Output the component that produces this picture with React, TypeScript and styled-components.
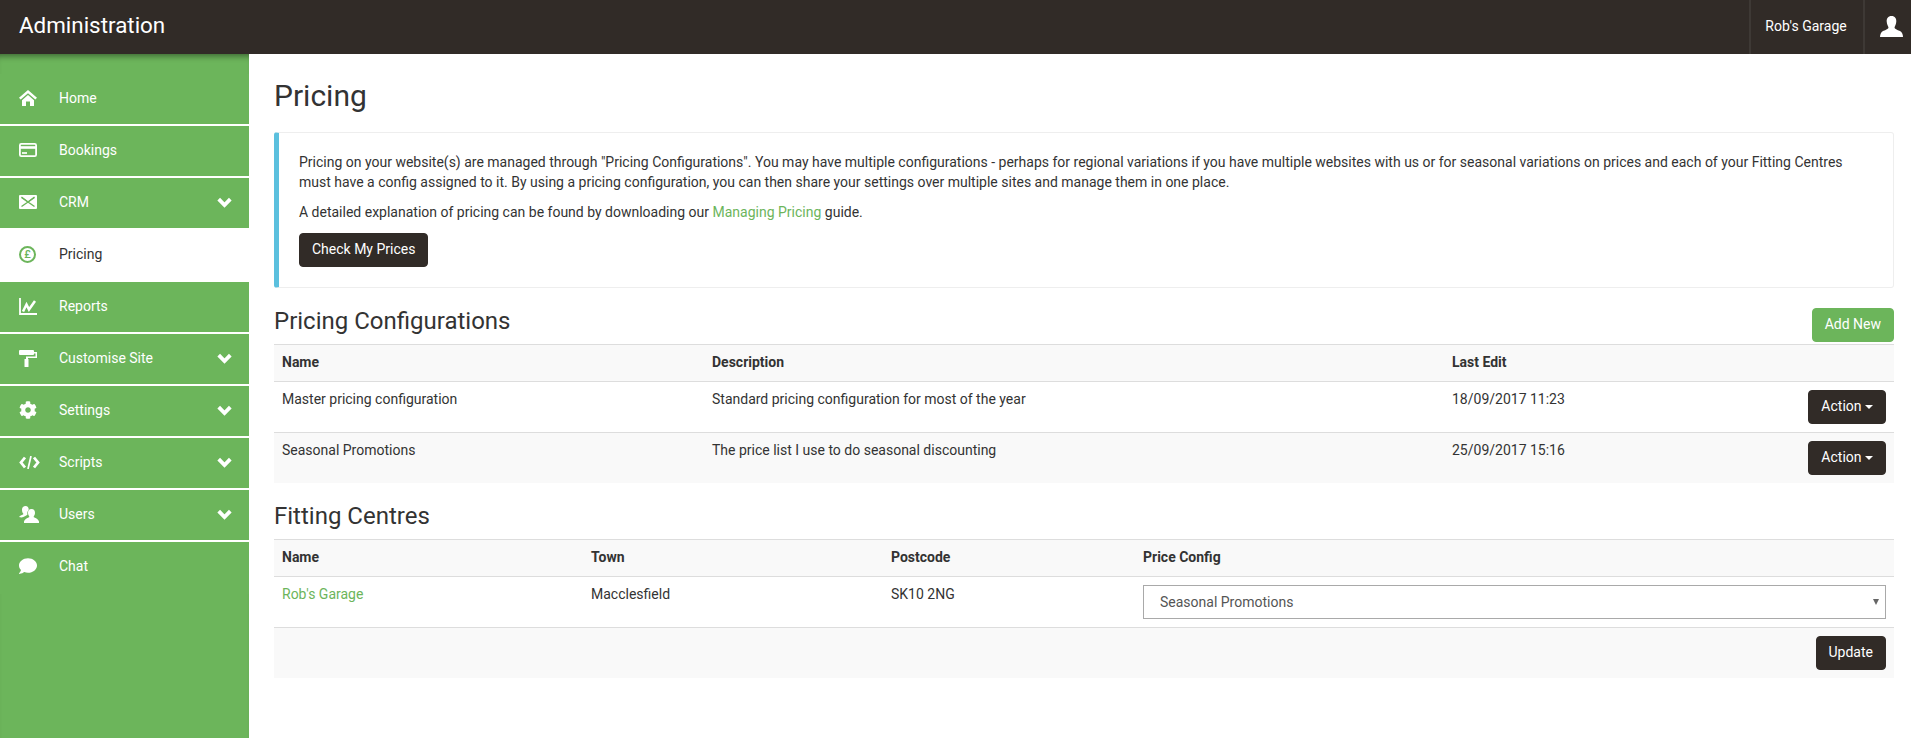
import React from "react";
import styled, { createGlobalStyle } from "styled-components";
import { FaCog, FaComment } from "react-icons/fa";

const GREEN = "#6cb55b";
const DARK = "#312b27";

const Global = createGlobalStyle`
  html, body { margin: 0; padding: 0; background: #fff; }
  body { font-family: Roboto, "Liberation Sans", sans-serif; font-size: 14px; line-height: 20px; color: #333; }
  * { box-sizing: border-box; }
`;

const Page = styled.div`
  display: flex;
  flex-direction: column;
  height: 738px;
  overflow: hidden;
`;
const TopBar = styled.header`
  display: flex;
  align-items: stretch;
  height: 54px;
  flex: none;
  background: ${DARK};
  color: #fff;
`;
const Brand = styled.div`
  flex: 1;
  padding-left: 19px;
  font-size: 22.4px;
  line-height: 51px;
`;
const TopCell = styled.div`
  display: flex;
  align-items: center;
  justify-content: center;
  width: 114px;
  padding: 0 2px 2px 0;
  border-left: 2px solid #3e3935;
  font-size: 14px;
`;
const UserCell = styled(TopCell)`
  width: 48px;
  padding: 0 0 2px 6px;
`;
const Body = styled.div`
  display: flex;
  flex: 1;
  min-height: 0;
`;
const Side = styled.nav`
  flex: none;
  width: 249px;
  padding-top: 20px;
  background: ${GREEN};
  box-shadow: inset 0 7px 6px -5px rgba(0, 0, 0, 0.45);
`;
const NavItem = styled.div<{ $active?: boolean }>`
  display: flex;
  align-items: center;
  height: ${(p) => (p.$active ? "54px" : "52px")};
  margin-top: ${(p) => (p.$active ? "-2px" : "0")};
  padding: 0 17px 2px 19px;
  border-bottom: ${(p) => (p.$active ? "0" : "2px solid #fff")};
  background: ${(p) => (p.$active ? "#fff" : GREEN)};
  color: ${(p) => (p.$active ? "#333" : "#fff")};
`;
const NavLast = styled(NavItem)`
  border-bottom: 0;
  padding-bottom: 4px;
`;
const NavIcon = styled.span`
  display: flex;
  align-items: center;
  width: 40px;
  flex: none;
  svg { display: block; }
`;
const NavLabel = styled.span`
  flex: 1;
`;
const Euro = styled.span`
  display: flex;
  align-items: center;
  justify-content: center;
  width: 17px;
  height: 17px;
  border: 2px solid ${GREEN};
  border-radius: 50%;
  color: ${GREEN};
  font-size: 11px;
  line-height: 13px;
  font-weight: 500;
`;
const Main = styled.main`
  flex: 1;
  min-width: 0;
  padding: 0 17px 0 25px;
`;
const Title = styled.h1`
  margin: 25px 0 20px;
  font-size: 30px;
  line-height: 33px;
  font-weight: 400;
`;
const Callout = styled.section`
  padding: 19px 20px 20px;
  border: 1px solid #eee;
  border-left: 5px solid #5bc0de;
  border-radius: 3px;
  p { margin: 0 0 10px; }
`;
const Link = styled.a`
  color: ${GREEN};
  text-decoration: none;
`;
const Btn = styled.button<{ $green?: boolean }>`
  display: inline-block;
  height: 34px;
  padding: 5px 12px 7px;
  border: 1px solid ${(p) => (p.$green ? GREEN : DARK)};
  border-radius: 4px;
  background: ${(p) => (p.$green ? GREEN : DARK)};
  color: #fff;
  font-family: inherit;
  font-size: 14px;
  line-height: 20px;
  vertical-align: top;
`;
const CalloutBtn = styled(Btn)`
  display: block;
  margin-top: 11px;
`;
const Caret = styled.span`
  display: inline-block;
  vertical-align: middle;
  border-top: 4px solid #fff;
  border-left: 4px solid transparent;
  border-right: 4px solid transparent;
`;
const SectionHead = styled.div`
  display: flex;
  justify-content: space-between;
  align-items: flex-start;
`;
const SectionTitle = styled.h3`
  margin: 20px 0 10px;
  font-size: 24px;
  line-height: 26px;
  font-weight: 400;
`;
const AddBtn = styled(Btn)`
  margin-top: 20px;
`;
const Table = styled.table`
  width: 100%;
  table-layout: fixed;
  border-collapse: separate;
  border-spacing: 0;
`;
const Th = styled.th<{ $w?: number }>`
  width: ${(p) => (p.$w ? `${p.$w}px` : "auto")};
  padding: 7px 8px 9px;
  border-top: 1px solid #ddd;
  background: #f9f9f9;
  text-align: left;
  font-weight: 700;
`;
const Td = styled.td<{ $striped?: boolean; $control?: boolean }>`
  padding: ${(p) => (p.$control ? "8px" : "7px 8px 8px")};
  border-top: 1px solid #ddd;
  vertical-align: top;
  background: ${(p) => (p.$striped ? "#f9f9f9" : "#fff")};
  text-align: ${(p) => (p.$control ? "right" : "left")};
`;
const SelectWrap = styled.div`
  position: relative;
  &::after {
    content: "";
    position: absolute;
    right: 7px;
    top: 14px;
    border-top: 6px solid #666;
    border-left: 3px solid transparent;
    border-right: 3px solid transparent;
  }
`;
const Select = styled.select`
  display: block;
  width: 100%;
  height: 34px;
  padding: 0 16px;
  border: 1px solid #a9a9a9;
  border-radius: 0;
  background: #fff;
  color: #555;
  font-family: inherit;
  font-size: 14px;
  appearance: none;
`;

const Home = () => (
  <svg width="18" height="16" viewBox="0 0 18 16" fill="#fff">
    <path d="M9 0 18 7.800 16.300 9.600 9 3.300 1.700 9.600 0 7.800Z" />
    <path d="M3 10.200 9 5 15 10.200V16H11V11.500H7V16H3Z" />
  </svg>
);
const Card = () => (
  <svg width="18" height="14" viewBox="0 0 18 14">
    <rect x=".9" y=".9" width="16.200" height="12.200" rx="1.400" fill="none" stroke="#fff" strokeWidth="1.800" />
    <rect x="1" y="3.200" width="16" height="2.600" fill="#fff" />
    <rect x="3" y="9" width="5" height="2" fill="#fff" opacity=".85" />
  </svg>
);
const Mail = () => (
  <svg width="18" height="14" viewBox="0 0 18 14">
    <rect width="18" height="14" rx="1" fill="#fff" />
    <path d="M2.500 2.500 15.500 11.500M15.500 2.500 2.500 11.500" fill="none" stroke={GREEN} strokeWidth="1.400" />
    <path d="M2.500 2 9 7 15.500 2" fill="none" stroke={GREEN} strokeWidth="1.100" />
  </svg>
);
const Chart = () => (
  <svg width="18" height="17" viewBox="0 0 18 17" fill="none" stroke="#fff">
    <path d="M1 0V16H18" strokeWidth="1.800" />
    <path d="M4 13.500 7.500 6.500 10 11.500 16 3" strokeWidth="2.500" />
  </svg>
);
const Roller = () => (
  <svg width="18" height="17" viewBox="0 0 18 17" fill="#fff">
    <rect x="0" y="0" width="15" height="5" rx="1" />
    <path d="M15 2H18V8H9V9.500H7V6.500H16.500V3.500H15Z" />
    <rect x="5.500" y="9" width="4" height="8" rx=".6" />
  </svg>
);
const Code = () => (
  <svg width="21" height="13" viewBox="0 0 21 13" fill="none" stroke="#fff" strokeWidth="2.800">
    <path d="M6 1.500 2 6.500 6 11.500M15 1.500 19 6.500 15 11.500" />
    <path d="M12 0 9 13" strokeWidth="1.700" />
  </svg>
);
const Users = () => (
  <svg width="20" height="17" viewBox="0 0 20 17" fill="#fff">
    <path d="M6.500 0C9 0 10 2 9.600 4 8.500 5 8 7 8.500 8.500 7 10 5 10.800 2.500 11.500L0 11C1 9.500 3.500 9 4.500 8 3.300 6.500 3 5.500 3 3.500 3 1.500 4.500 0 6.500 0Z" />
    <path d="M12.500 3C15 3 16.300 5 16 7.300 15.800 9 15 10 14.500 11 16 12 19 12.500 20 15.500V17H5V15.500C6 12.500 9 12 10.500 11 10 10 9.200 9 9 7.300 8.700 5 10 3 12.500 3Z" />
  </svg>
);
const Person = () => (
  <svg width="23" height="21" viewBox="0 0 23 21" fill="#fff">
    <path d="M11.500 0C15 0 16.500 2.500 16.300 5.500 16.100 8.500 15 10 14.500 11.500 14.500 13 17 13.800 20 15 22 16 23 18.500 23 21H0C0 18.500 1 16 3 15 6 13.800 8.500 13 8.500 11.500 8 10 6.900 8.500 6.700 5.500 6.500 2.500 8 0 11.500 0Z" />
  </svg>
);
const Chevron = () => (
  <svg width="15" height="11" viewBox="0 0 15 11" fill="none" stroke="#fff" strokeWidth="3.800">
    <path d="M1.700 2.200 7.500 8 13.300 2.200" />
  </svg>
);

const nav: { label: string; icon: React.ReactNode; more?: boolean; active?: boolean }[] = [
  { label: "Home", icon: <Home /> },
  { label: "Bookings", icon: <Card /> },
  { label: "CRM", icon: <Mail />, more: true },
  { label: "Pricing", icon: <Euro>£</Euro>, active: true },
  { label: "Reports", icon: <Chart /> },
  { label: "Customise Site", icon: <Roller />, more: true },
  { label: "Settings", icon: <FaCog size={18} />, more: true },
  { label: "Scripts", icon: <Code />, more: true },
  { label: "Users", icon: <Users />, more: true },
];

export default function App() {
  return (
    <Page>
      <Global />
      <TopBar>
        <Brand>Administration</Brand>
        <TopCell>Rob's Garage</TopCell>
        <UserCell>
          <Person />
        </UserCell>
      </TopBar>
      <Body>
        <Side>
          {nav.map((n) => (
            <NavItem key={n.label} $active={n.active}>
              <NavIcon>{n.icon}</NavIcon>
              <NavLabel>{n.label}</NavLabel>
              {n.more && <Chevron />}
            </NavItem>
          ))}
          <NavLast>
            <NavIcon>
              <FaComment size={18} />
            </NavIcon>
            <NavLabel>Chat</NavLabel>
          </NavLast>
        </Side>
        <Main>
          <Title>Pricing</Title>
          <Callout>
            <p>
              Pricing on your website(s) are managed through "Pricing Configurations". You may have multiple configurations - perhaps for regional variations if you have multiple websites with us or for seasonal variations on prices and each of your Fitting Centres must have a config assigned to it. By using a pricing configuration, you can then share your settings over multiple sites and manage them in one place.
            </p>
            <p>
              A detailed explanation of pricing can be found by downloading our <Link>Managing Pricing</Link> guide.
            </p>
            <CalloutBtn>Check My Prices</CalloutBtn>
          </Callout>
          <SectionHead>
            <SectionTitle>Pricing Configurations</SectionTitle>
            <AddBtn $green>Add New</AddBtn>
          </SectionHead>
          <Table>
            <thead>
              <tr>
                <Th $w={430}>Name</Th>
                <Th $w={740}>Description</Th>
                <Th>Last Edit</Th>
                <Th $w={120} />
              </tr>
            </thead>
            <tbody>
              <tr>
                <Td>Master pricing configuration</Td>
                <Td>Standard pricing configuration for most of the year</Td>
                <Td>18/09/2017 11:23</Td>
                <Td $control>
                  <Btn>Action <Caret /></Btn>
                </Td>
              </tr>
              <tr>
                <Td $striped>Seasonal Promotions</Td>
                <Td $striped>The price list I use to do seasonal discounting</Td>
                <Td $striped>25/09/2017 15:16</Td>
                <Td $striped $control>
                  <Btn>Action <Caret /></Btn>
                </Td>
              </tr>
            </tbody>
          </Table>
          <SectionTitle>Fitting Centres</SectionTitle>
          <Table>
            <thead>
              <tr>
                <Th $w={309}>Name</Th>
                <Th $w={300}>Town</Th>
                <Th $w={252}>Postcode</Th>
                <Th>Price Config</Th>
              </tr>
            </thead>
            <tbody>
              <tr>
                <Td><Link>Rob's Garage</Link></Td>
                <Td>Macclesfield</Td>
                <Td>SK10 2NG</Td>
                <Td $control>
                  <SelectWrap>
                    <Select defaultValue="Seasonal Promotions">
                      <option>Master pricing configuration</option>
                      <option>Seasonal Promotions</option>
                    </Select>
                  </SelectWrap>
                </Td>
              </tr>
              <tr>
                <Td $striped colSpan={4} $control>
                  <Btn>Update</Btn>
                </Td>
              </tr>
            </tbody>
          </Table>
        </Main>
      </Body>
    </Page>
  );
}
